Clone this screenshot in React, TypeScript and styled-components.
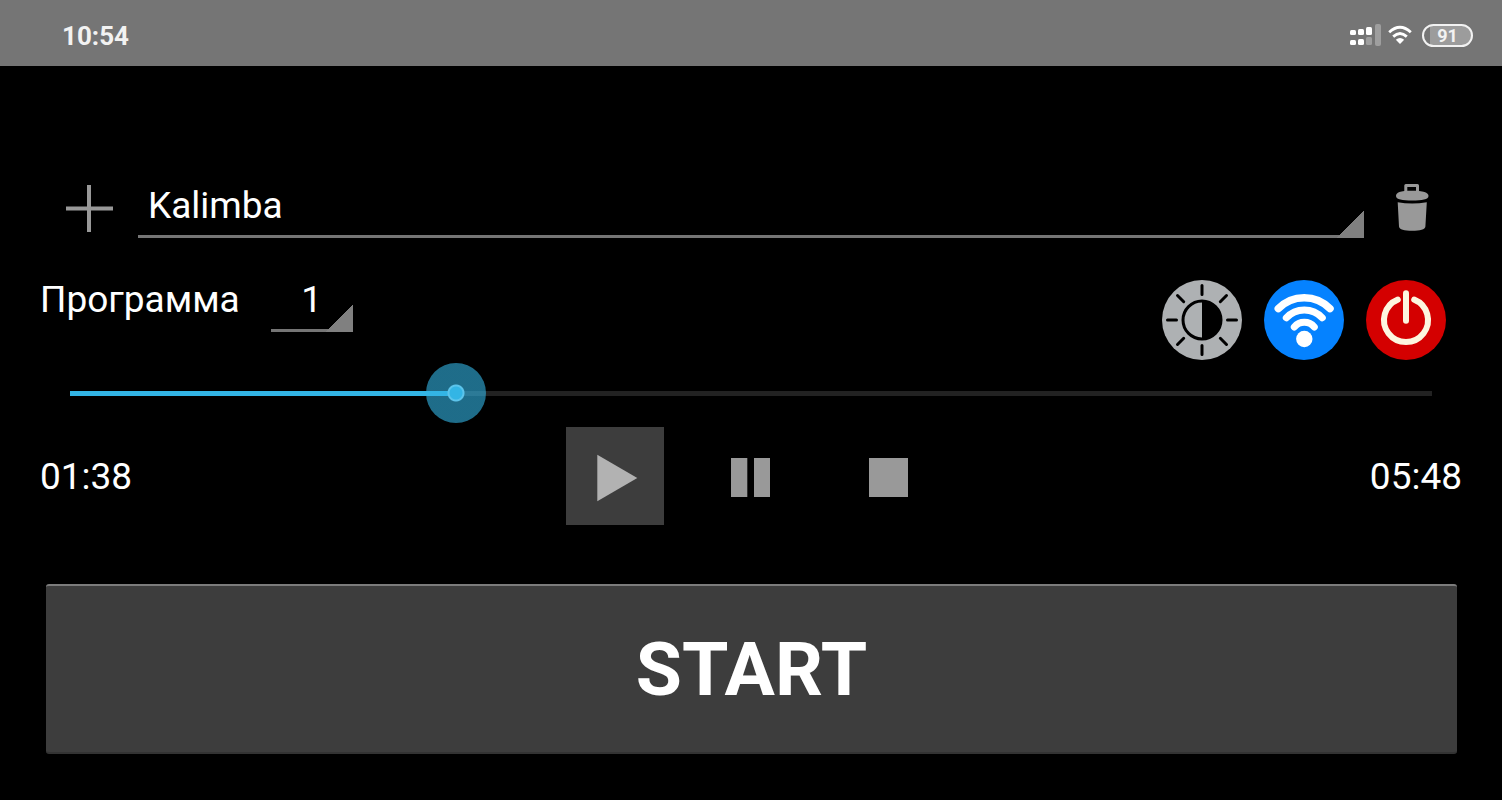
import React, { useState } from "react";
import styled, { createGlobalStyle, css } from "styled-components";

const GlobalStyle = createGlobalStyle`
  *, *::before, *::after { box-sizing: border-box; }
  html, body { margin: 0; background: #000; }
  body {
    color: #fff;
    font-family: Roboto, "Noto Sans", sans-serif;
    font-size: 37px;
    line-height: 44px;
  }
  button, select, input { font: inherit; color: inherit; margin: 0; }
`;

const StatusBar = styled.header`
  display: flex;
  align-items: center;
  justify-content: space-between;
  height: 66px;
  padding: 4px 29px 0 62px;
  background: #757575;
`;

const Clock = styled.time`
  padding-top: 1px;
  color: #f2f2f2;
  font-size: 26px;
  line-height: 32px;
  font-weight: 700;
`;

const StatusIcons = styled.div`
  display: flex;
  align-items: center;
  gap: 7px;
`;

const Battery = styled.div`
  display: flex;
  align-items: center;
  justify-content: center;
  width: 51px;
  height: 23px;
  margin-left: 3px;
  border: 2px solid #f2f2f2;
  border-radius: 12px;
  background: linear-gradient(to right, #757575 6px, #9c9c9c 6px);
  color: #f2f2f2;
  font-size: 18px;
  line-height: 19px;
  font-weight: 700;
`;

const Main = styled.main`
  display: flex;
  flex-direction: column;
  padding: 106px 40px 46px;
`;

const TrackRow = styled.div`
  display: flex;
  align-items: flex-start;
`;

const IconButton = styled.button`
  display: flex;
  align-items: center;
  justify-content: center;
  flex: none;
  width: 98px;
  height: 72px;
  padding: 0;
  border: 0;
  background: none;
  cursor: pointer;
`;

const Spinner = styled.select<{ $compact?: boolean }>`
  appearance: none;
  height: 66px;
  padding: 2px 10px 0;
  border: 0;
  border-radius: 0;
  outline: 0;
  background:
    linear-gradient(135deg, transparent 50%, #808080 50%) right bottom / 27px 27px no-repeat,
    linear-gradient(#757575, #757575) right bottom / 100% 3px no-repeat;
  cursor: pointer;
  ${(p) =>
    p.$compact
      ? css`
          flex: none;
          width: 82px;
          text-align: center;
          text-align-last: center;
        `
      : css`
          flex: 1;
          min-width: 0;
        `}
  option { background: #222; }
`;

const ProgramRow = styled.div`
  display: flex;
  justify-content: space-between;
  align-items: flex-start;
  margin-top: 22px;
`;

const ProgramField = styled.div`
  display: flex;
  align-items: center;
  gap: 31px;
`;

const FieldLabel = styled.label`
  padding-top: 2px;
`;

const Toggles = styled.div`
  display: flex;
  gap: 22px;
  padding: 14px 16px 0 0;
`;

const RoundButton = styled.button<{ $color: string }>`
  width: 80px;
  height: 80px;
  padding: 0;
  border: 0;
  border-radius: 50%;
  background: ${(p) => p.$color};
  cursor: pointer;
  svg { display: block; }
`;

const Seek = styled.input`
  appearance: none;
  display: block;
  width: 100%;
  height: 60px;
  margin-top: 3px;
  outline: 0;
  background: linear-gradient(
      to right,
      #33b5e5 var(--progress),
      #222 var(--progress)
    )
    center / calc(100% - 60px) 5px no-repeat;
  cursor: pointer;

  &::-webkit-slider-runnable-track { height: 60px; background: none; }
  &::-webkit-slider-thumb {
    appearance: none;
    width: 60px;
    height: 60px;
    border-radius: 50%;
    background: radial-gradient(
      circle,
      #33b5e5 6px,
      #5cc4eb 7px,
      #5cc4eb 8px,
      rgba(51, 181, 229, 0.6) 9px
    );
  }
`;

const PlayerRow = styled.div`
  display: grid;
  grid-template-columns: 1fr auto 1fr;
  align-items: center;
  margin-top: 4px;
`;

const PlayTime = styled.time<{ $end?: boolean }>`
  padding-top: 2px;
  text-align: ${(p) => (p.$end ? "right" : "left")};
`;

const Transport = styled.div`
  display: flex;
  gap: 38px;
`;

const TransportButton = styled.button<{ $active?: boolean }>`
  width: 98px;
  height: 98px;
  padding: 0;
  border: 0;
  background: ${(p) => (p.$active ? "#3d3d3d" : "transparent")};
  color: ${(p) => (p.$active ? "#b2b2b2" : "#999")};
  cursor: pointer;
  svg { display: block; fill: currentColor; }
`;

const StartButton = styled.button`
  height: 170px;
  margin: 59px 5px 0 6px;
  padding: 0;
  border: 0;
  border-top: 2px solid #7c7c7c;
  border-bottom: 2px solid #333;
  border-radius: 3px;
  background: #3d3d3d;
  font-size: 75px;
  line-height: 88px;
  font-weight: 700;
  cursor: pointer;
`;

const SignalIcon = () => (
  <svg width="31" height="22" viewBox="0 0 31 22" fill="#fff" aria-hidden="true">
    <rect x="0" y="6" width="6" height="5" rx="1.5" />
    <rect x="8" y="5" width="6" height="6" rx="1.5" />
    <rect x="16" y="3" width="6" height="8" rx="1.5" />
    <rect x="25" y="0" width="6" height="22" rx="2" opacity="0.3" />
    <rect x="0" y="16" width="6" height="5" rx="1.5" />
    <rect x="8" y="15" width="6" height="6" rx="1.5" />
    <rect x="16" y="13" width="6" height="8" rx="1.5" opacity="0.3" />
  </svg>
);

const StatusWifiIcon = () => (
  <svg width="24" height="20" viewBox="0 0 24 20" fill="none" stroke="#fff" strokeWidth="2.8" aria-hidden="true">
    <path d="M1.200 7.200Q12 -2.800 22.800 7.200" />
    <path d="M5.200 11.600Q12 5.400 18.800 11.600" />
    <path d="M12 19L7.800 14.800Q12 11.200 16.200 14.800Z" fill="#fff" stroke="none" />
  </svg>
);

const PlusIcon = () => (
  <svg width="48" height="48" viewBox="0 0 48 48" stroke="#999" strokeWidth="4" aria-hidden="true">
    <path d="M24 1V48M1 24.5H48" />
  </svg>
);

const TrashIcon = () => (
  <svg width="48" height="48" viewBox="0 0 48 48" fill="#999" aria-hidden="true">
    <path d="M16.800 9V1.500H28.500V9" fill="none" stroke="#999" strokeWidth="3" strokeLinejoin="round" />
    <path d="M7 12C7 8.600 11 6.800 22.700 6.800S39.500 8.600 39.500 12 33 16.600 23.200 16.600 7 15.400 7 12Z" />
    <path d="M8.700 18.200Q23 20.600 37.800 18.200L36.400 42.500C36.200 45.600 31 46.800 23.200 46.800S10.200 45.600 10 42.500Z" />
  </svg>
);

const BrightnessIcon = () => (
  <svg width="80" height="80" viewBox="0 0 80 80" fill="none" stroke="#000" strokeWidth="3" strokeLinecap="round" aria-hidden="true">
    <circle cx="40" cy="40" r="19" />
    <path d="M40 21A19 19 0 0 1 40 59Z" fill="#000" stroke="none" />
    <path d="M40 5.500V14.500M40 65.500V74.500M5.500 40H14.500M65.500 40H74.500M15.500 15.500L21.700 21.700M58.300 58.300L64.500 64.500M64.500 15.500L58.300 21.700M21.700 58.300L15.500 64.500" />
  </svg>
);

const WifiIcon = () => (
  <svg width="80" height="80" viewBox="0 0 80 80" fill="none" stroke="#fff" strokeLinecap="round" aria-hidden="true">
    <path d="M14.300 28.600A36 36 0 0 1 66 28.600" strokeWidth="7.500" />
    <path d="M22.300 37.800A24.500 24.500 0 0 1 58.300 37.800" strokeWidth="7" />
    <path d="M30.300 47A13 13 0 0 1 50.300 47" strokeWidth="7" />
    <circle cx="40.300" cy="59" r="8.200" fill="#fff" stroke="none" />
  </svg>
);

const PowerIcon = () => (
  <svg width="80" height="80" viewBox="0 0 80 80" fill="none" stroke="#fdf6df" strokeWidth="6" strokeLinecap="round" aria-hidden="true">
    <path d="M31.800 19.600A22 22 0 1 0 48.200 19.600" />
    <path d="M40 13.300V40.700" />
  </svg>
);

const PlayIcon = () => (
  <svg width="98" height="98" viewBox="0 0 98 98" aria-hidden="true">
    <path d="M31.300 27.700L71.300 51L31.300 74.200Z" />
  </svg>
);

const PauseIcon = () => (
  <svg width="98" height="98" viewBox="0 0 98 98" aria-hidden="true">
    <path d="M29 31H45.300V70H29ZM52 31H68V70H52Z" />
  </svg>
);

const StopIcon = () => (
  <svg width="98" height="98" viewBox="0 0 98 98" aria-hidden="true">
    <path d="M31 31H70V70H31Z" />
  </svg>
);

const DURATION = 348;

const formatTime = (seconds: number) =>
  [Math.floor(seconds / 60), Math.floor(seconds % 60)]
    .map((n) => String(n).padStart(2, "0"))
    .join(":");

export default function App() {
  const [position, setPosition] = useState(98.7);
  const progress = { "--progress": `${(position / DURATION) * 100}%` } as React.CSSProperties;

  return (
    <>
      <GlobalStyle />
      <StatusBar>
        <Clock>10:54</Clock>
        <StatusIcons>
          <SignalIcon />
          <StatusWifiIcon />
          <Battery>91</Battery>
        </StatusIcons>
      </StatusBar>
      <Main>
        <TrackRow>
          <IconButton type="button" aria-label="Добавить">
            <PlusIcon />
          </IconButton>
          <Spinner aria-label="Трек" defaultValue="Kalimba">
            <option>Kalimba</option>
          </Spinner>
          <IconButton type="button" aria-label="Удалить">
            <TrashIcon />
          </IconButton>
        </TrackRow>

        <ProgramRow>
          <ProgramField>
            <FieldLabel htmlFor="program">Программа</FieldLabel>
            <Spinner id="program" $compact defaultValue="1">
              <option>1</option>
            </Spinner>
          </ProgramField>
          <Toggles>
            <RoundButton type="button" $color="#aeb1b3" aria-label="Яркость">
              <BrightnessIcon />
            </RoundButton>
            <RoundButton type="button" $color="#0582ff" aria-label="Wi-Fi">
              <WifiIcon />
            </RoundButton>
            <RoundButton type="button" $color="#d40000" aria-label="Питание">
              <PowerIcon />
            </RoundButton>
          </Toggles>
        </ProgramRow>

        <Seek
          type="range"
          aria-label="Позиция"
          min={0}
          max={DURATION}
          step="any"
          value={position}
          style={progress}
          onChange={(e) => setPosition(Number(e.target.value))}
        />

        <PlayerRow>
          <PlayTime>{formatTime(position)}</PlayTime>
          <Transport>
            <TransportButton type="button" $active aria-label="Воспроизвести">
              <PlayIcon />
            </TransportButton>
            <TransportButton type="button" aria-label="Пауза">
              <PauseIcon />
            </TransportButton>
            <TransportButton type="button" aria-label="Стоп">
              <StopIcon />
            </TransportButton>
          </Transport>
          <PlayTime $end>{formatTime(DURATION)}</PlayTime>
        </PlayerRow>

        <StartButton type="button">START</StartButton>
      </Main>
    </>
  );
}
